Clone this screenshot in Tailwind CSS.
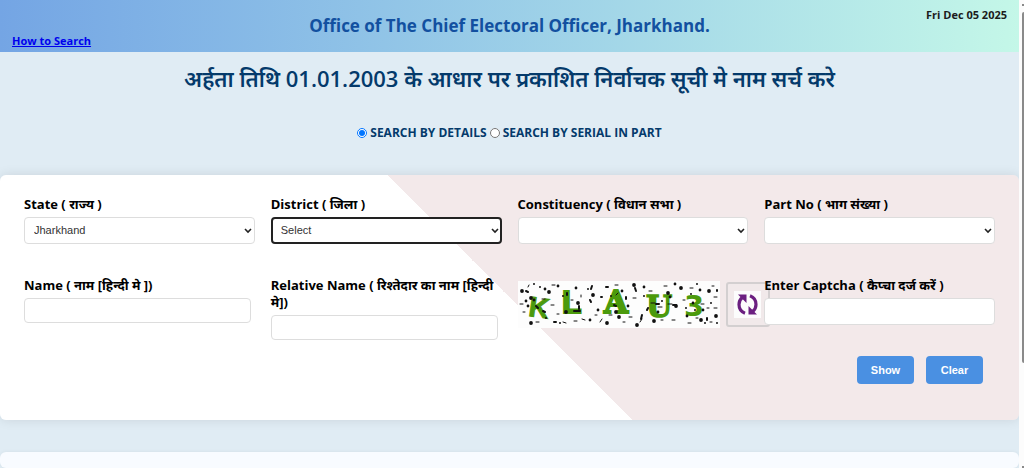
<!DOCTYPE html>
<html lang="hi">
<head>
  <meta charset="UTF-8">
  <meta name="viewport" content="width=device-width, initial-scale=1.0">
  <title>Search</title>
  <script src="https://cdn.jsdelivr.net/npm/@tailwindcss/browser@4"></script>
</head>
<body class="flex h-screen overflow-hidden bg-[#e0ecf4] font-['Open_Sans','Noto_Sans',sans-serif]">

  <main class="flex min-w-0 flex-1 flex-col">
    <header class="relative flex h-[52px] shrink-0 items-center justify-center bg-linear-to-r from-[#74a5e4] to-[#c4f7e8]">
      <h1 class="text-[17px] font-bold text-[#1250a0]">Office of The Chief Electoral Officer, Jharkhand.</h1>
      <a href="#" class="absolute bottom-[3px] left-3 text-[11px] font-bold leading-4 text-[#0000ee] underline">How to Search</a>
      <p class="absolute right-3 top-[7px] text-[11px] font-bold leading-4 text-[#1c1c1c]">Fri Dec 05 2025</p>
    </header>

    <h2 class="mt-2 text-center text-[22px] font-semibold leading-9 text-[#043a6b]">अर्हता तिथि 01.01.2003 के आधार पर प्रकाशित निर्वाचक सूची मे नाम सर्च करे</h2>

    <div class="mt-[29px] flex h-4 items-center justify-center gap-[3px] text-xs font-bold text-[#043a6b]">
      <input type="radio" id="byDetails" name="searchType" class="size-[10px] accent-[#0075ff]" checked>
      <label for="byDetails">SEARCH BY DETAILS</label>
      <input type="radio" id="bySerial" name="searchType" class="size-[10px]">
      <label for="bySerial">SEARCH BY SERIAL IN PART</label>
    </div>

    <form class="mt-[34px] rounded-md bg-linear-[45deg,#ffffff_50%,#f3e9ea_50%] px-6 pb-9 pt-[21px] shadow-[0_0_12px_rgba(0,0,0,0.1)]">
      <!-- search fields -->
      <div class="grid grid-cols-4 gap-x-4 text-[13px] font-bold leading-[17px] text-black">
        <div class="h-[81px]">
          <label for="state" class="block">State ( राज्य )</label>
          <div class="relative mt-1">
            <select id="state" class="h-[27px] w-full appearance-none rounded border border-[#dddddd] bg-white pl-[9px] font-['Liberation_Sans',sans-serif] text-[11px] font-normal text-[#333333]">
              <option>Jharkhand</option>
            </select>
            <svg class="pointer-events-none absolute right-[3px] top-[10px] h-[7px] w-2" viewBox="0 0 8 7" fill="none" stroke="#222222" stroke-width="1.6"><path d="M1 2l3 3 3-3"/></svg>
          </div>
        </div>
        <div>
          <label for="district" class="block">District ( जिला )</label>
          <div class="relative mt-1">
            <select id="district" class="h-[27px] w-full appearance-none rounded border-2 border-[#222222] bg-white pl-2 font-['Liberation_Sans',sans-serif] text-[11px] font-normal text-[#333333]">
              <option>Select</option>
            </select>
            <svg class="pointer-events-none absolute right-[3px] top-[10px] h-[7px] w-2" viewBox="0 0 8 7" fill="none" stroke="#222222" stroke-width="1.6"><path d="M1 2l3 3 3-3"/></svg>
          </div>
        </div>
        <div>
          <label for="constituency" class="block">Constituency ( विधान सभा )</label>
          <div class="relative mt-1">
            <select id="constituency" class="h-[27px] w-full appearance-none rounded border border-[#dddddd] bg-white"></select>
            <svg class="pointer-events-none absolute right-[3px] top-[10px] h-[7px] w-2" viewBox="0 0 8 7" fill="none" stroke="#222222" stroke-width="1.6"><path d="M1 2l3 3 3-3"/></svg>
          </div>
        </div>
        <div>
          <label for="partNo" class="block">Part No ( भाग संख्या )</label>
          <div class="relative mt-1">
            <select id="partNo" class="h-[27px] w-full appearance-none rounded border border-[#dddddd] bg-white"></select>
            <svg class="pointer-events-none absolute right-[3px] top-[10px] h-[7px] w-2" viewBox="0 0 8 7" fill="none" stroke="#222222" stroke-width="1.6"><path d="M1 2l3 3 3-3"/></svg>
          </div>
        </div>

        <div class="h-[63px]">
          <label for="name" class="block">Name ( नाम [हिन्दी मे ])</label>
          <div class="mt-1 pr-1">
            <input type="text" id="name" class="block h-[25px] w-full rounded border border-[#dddddd] bg-white px-2">
          </div>
        </div>
        <div>
          <label for="relativeName" class="block">Relative Name ( रिश्तेदार का नाम [हिन्दी मे])</label>
          <div class="mt-1 pr-1">
            <input type="text" id="relativeName" class="block h-[25px] w-full rounded border border-[#dddddd] bg-white px-2">
          </div>
        </div>
        <div class="flex items-start gap-[6px] pt-1">
          <!-- captcha -->
          <svg class="h-[47px] w-[202px] shrink-0 bg-[#fdfdfd]" viewBox="0 0 202 47" role="img" aria-label="Captcha">
            <g fill="#4b9a0c">
              <text x="11" y="36" font-size="28" font-family="Liberation Sans, sans-serif" stroke="#4b9a0c" transform="rotate(8 20 26)">K</text>
              <text x="44" y="32" font-size="32" font-family="Liberation Sans, sans-serif" stroke="#4b9a0c" stroke-width="2">L</text>
              <text x="86" y="32" font-size="31" font-weight="bold" font-family="DejaVu Serif, serif" stroke="#4b9a0c" stroke-width="2">A</text>
              <text x="128" y="36" font-size="30" font-family="DejaVu Serif, serif" stroke="#4b9a0c" stroke-width="1.500">U</text>
              <text x="166" y="35" font-size="29" font-weight="bold" font-family="DejaVu Sans, sans-serif">3</text>
            </g>
            <g fill="none" stroke="#111111" stroke-linecap="round">
              <path stroke-width="3.800" d="M4 10h0M13 17h0M13 42h0M31 11h0M48 31h0M60 22h0M75 14h0M98 31h0M101 36h0M89 42h0M116 4h0M119 44h0M136 40h0M150 12h0M163 7h0M183 39h0M191 10h0M198 35h0M158 25h0"/>
              <path stroke-width="2.800" d="M16 19h0M27 8h0M40 5h0M58 7h0M72 39h0M80 29h0M104 10h0M126 6h0M140 31h0M152 16h0M169 35h0M175 22h0M185 29h0M182 9h0M110 25h0M157 3h0M8 20h0M10 25h0"/>
              <path stroke-width="2" d="M8 10l2 1M16 3h0M22 6h0M18 25l2 2M25 30l2 1M28 37h0M36 41h2M42 42h0M45 15h0M49 12v2M56 30h6M61 25v3M70 8h0M74 5l-1 3M72 19l1 2M83 16h1M88 6h2M93 15h0M96 24l2 1M108 16v2M117 7l1 3M124 34l-1 4M126 15h0M130 27l-1 2M138 23h3M144 20h0M155 24h3M168 27h0M173 13h0M177 29h0M179 3h0M189 37v2M193 22h0M199 9v1M199 42h0M187 42h0"/>
              <path stroke-width="1" d="M2 23h3M5 31h2M10 6l1-2M18 41h3M24 18h3M33 24h3M34 4h3M39 33h2M45 41l3 1M53 19h2M56 40h3M63 14v2M64 38l3 1M77 34h2M82 41l2-3M91 34h3M97 4h3M98 14l2-2M105 41h2M111 36h3M115 17h3M122 41l2-3M131 10h3M133 22h4M140 26h4M143 39h2M146 5h3M150 23h4M154 39h3M165 19h2M170 42h3M172 7h3M178 37h2M183 23h3M189 27h2M192 41h2M196 16h3M196 27h3M194 5h2"/>
            </g>
          </svg>
          <button type="button" aria-label="Refresh captcha" class="mt-px flex h-[45px] w-11 shrink-0 items-center justify-center rounded-[3px] border-2 border-[#d3cfd0] bg-[#f1e9ea]">
            <svg class="h-[27px] w-[27px] shrink-0 bg-[#fcfcfc]" viewBox="0 0 27 27" fill="none" stroke="#6b1f80" stroke-width="3.2">
              <path d="M11 22.200C6.600 20.500 5 17 5 13.500C5 10.500 6.300 8 8.500 6.200"/>
              <path d="M16 4.800C20.400 6.500 22 10 22 13.500C22 16.500 20.700 19 18.500 20.800"/>
              <path fill="#6b1f80" stroke="none" d="M4 3.500h8.500v8.500zM23 23.500h-8.500v-8.500z"/>
            </svg>
          </button>
        </div>
        <div class="relative">
          <label for="captcha" class="block">Enter Captcha ( कैप्चा दर्ज करें )</label>
          <input type="text" id="captcha" class="mt-1 block h-[27px] w-full rounded border border-[#dddddd] bg-white px-2">
        </div>
      </div>

      <div class="mt-4 flex justify-end gap-3 pr-3 font-['Liberation_Sans',sans-serif] text-[11px] font-bold text-white">
        <button type="button" class="h-7 w-[57px] rounded bg-[#4a90e2]">Show</button>
        <button type="button" class="h-7 w-[57px] rounded bg-[#4a90e2]">Clear</button>
      </div>
    </form>

    <section class="mt-8 flex-1 rounded-md bg-[#f8fbff] shadow-[0_0_4px_rgba(0,0,0,0.06)]"></section>
  </main>

  <!-- page scrollbar -->
  <aside class="flex w-[5px] shrink-0 flex-col items-end bg-[#fcfcfc]">
    <div class="mt-1 h-[2px] w-[2px] bg-[#8a8a8a]"></div>
    <div class="mt-[6px] h-3/4 w-[2px] rounded-l-full bg-[#8a8a8a]"></div>
    <div class="mt-auto h-[2px] w-[2px] bg-[#8a8a8a]"></div>
  </aside>

</body>
</html>
